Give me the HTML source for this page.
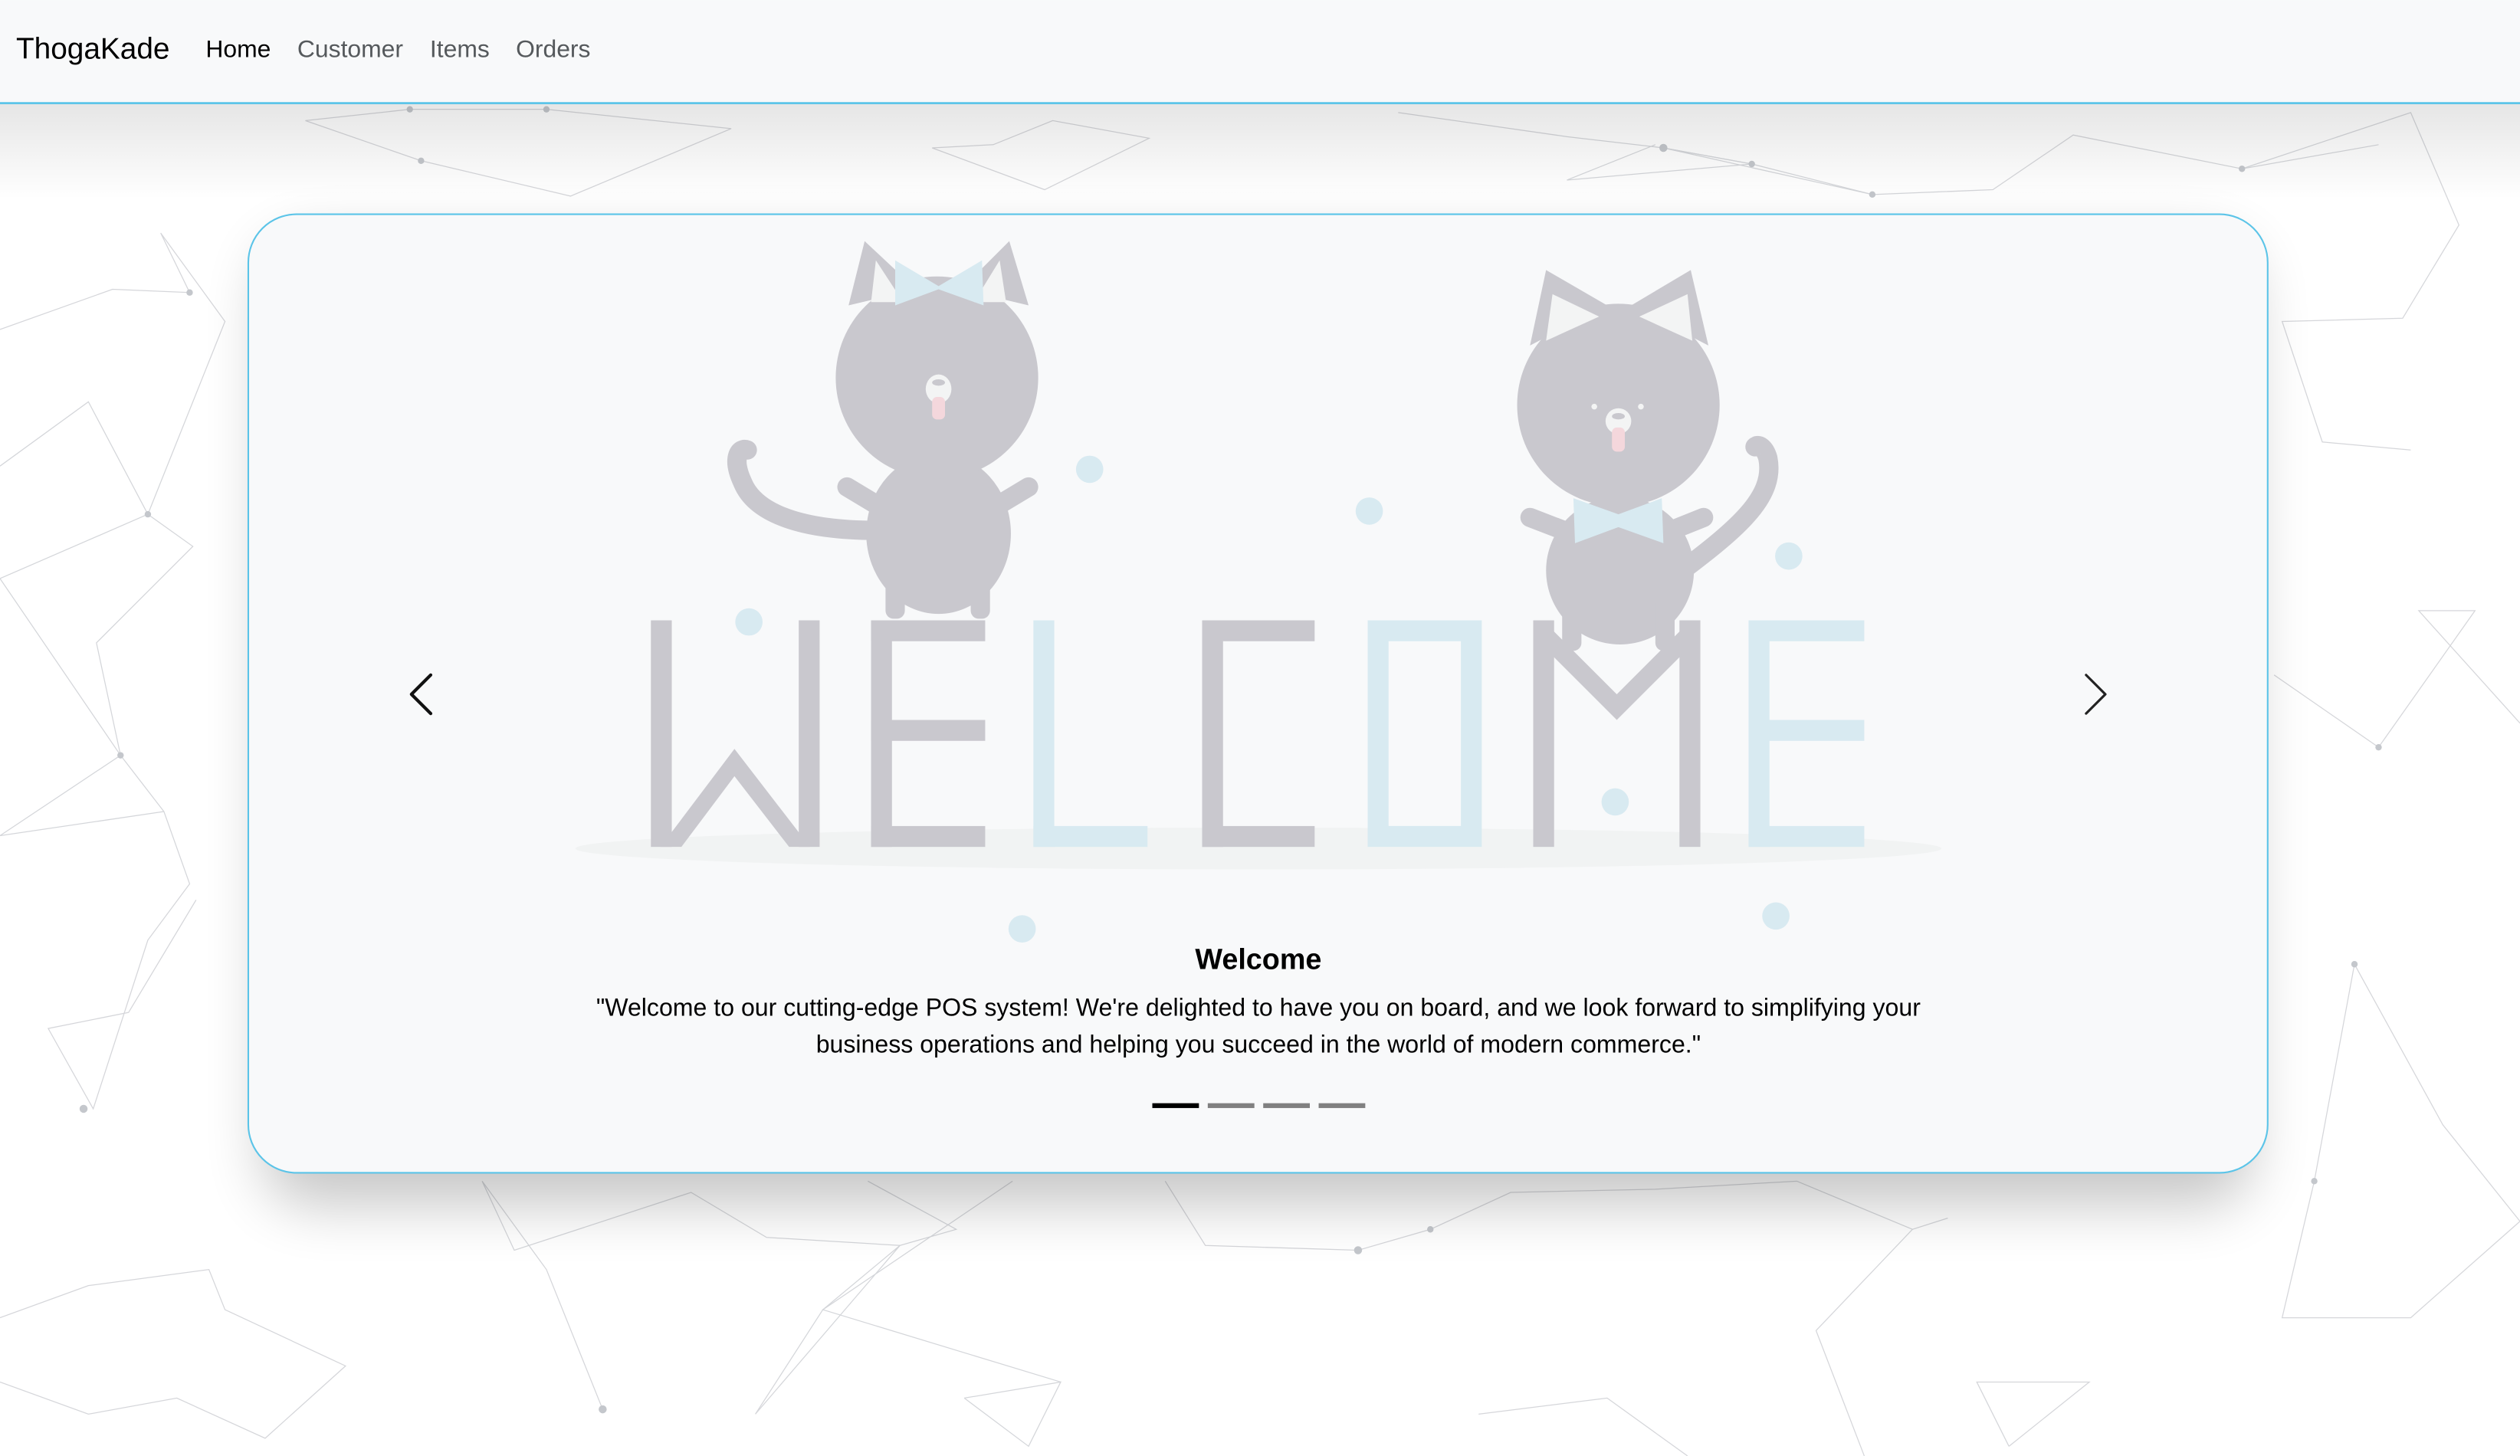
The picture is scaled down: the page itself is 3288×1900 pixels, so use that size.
<!DOCTYPE html>
<html><head><meta charset="utf-8">
<style>
html,body{margin:0;padding:0;background:#fff;width:3288px;height:1900px;overflow:hidden}
svg{display:block}
text{font-family:"Liberation Sans",sans-serif}
</style></head>
<body>
<svg width="3288" height="1900" viewBox="0 0 1568 906" xmlns="http://www.w3.org/2000/svg">
<defs>
<linearGradient id="nsh" x1="0" y1="0" x2="0" y2="1">
<stop offset="0" stop-color="#000" stop-opacity="0.10"/>
<stop offset="1" stop-color="#000" stop-opacity="0"/>
</linearGradient>
<filter id="cs" x="-10%" y="-10%" width="120%" height="130%">
<feGaussianBlur stdDeviation="18"/>
</filter>
</defs>
<rect width="1568" height="906" fill="#fff"/>
<g stroke="#d0d2d6" stroke-width="0.6" fill="none" opacity="0.9">
<polyline points="190,75 255,68 340,68 455,80 355,122 262,100 190,75"/>
<polyline points="580,92 618,90 655,75 715,86 650,118 580,92"/>
<polyline points="870,70 975,85 1035,92 1090,102 1165,121 1240,118 1290,84 1395,105 1480,90"/>
<polyline points="1030,90 975,112 1090,102 1035,92 1165,121"/>
<polyline points="1395,105 1500,70 1530,140 1495,198 1420,200 1445,275 1500,280"/>
<polyline points="0,205 70,180 118,182 100,145 140,200 92,320 120,340 60,400 75,470 102,505 118,550 92,585 58,690 30,640 80,630 122,560"/>
<polyline points="0,290 55,250 92,320 0,360 75,470 0,520 102,505"/>
<polyline points="1415,420 1480,465 1540,380 1505,380 1568,450"/>
<polyline points="1440,735 1465,600 1520,700 1568,760 1500,820 1460,820 1420,820 1440,735"/>
<polyline points="1250,900 1300,860 1230,860 1250,900"/>
<polyline points="300,735 320,778 430,742 477,770 560,775 595,765 540,735"/>
<polyline points="725,735 750,775 845,778 890,765 940,742 1030,740 1118,735 1190,765 1212,758"/>
<polyline points="0,820 55,800 130,790 140,815 215,850 165,895 110,870 55,880 0,860"/>
<polyline points="470,880 512,815 560,775 470,880"/>
<polyline points="600,870 640,900 660,860 600,870"/>
<polyline points="920,880 1000,870 1050,906"/>
<polyline points="1130,828 1190,765 1130,828 1160,906"/>
<polyline points="630,735 512,815 660,860"/>
<polyline points="375,877 340,790 300,735"/>
</g>
<g fill="#c4c7cc">
<circle cx="255" cy="68" r="2"/><circle cx="340" cy="68" r="2"/><circle cx="262" cy="100" r="2"/>
<circle cx="1035" cy="92" r="2.5"/><circle cx="1090" cy="102" r="2"/><circle cx="1165" cy="121" r="2"/>
<circle cx="1395" cy="105" r="2"/><circle cx="118" cy="182" r="2"/><circle cx="92" cy="320" r="2"/>
<circle cx="75" cy="470" r="2"/><circle cx="52" cy="690" r="2.5"/><circle cx="1480" cy="465" r="2"/>
<circle cx="845" cy="778" r="2.5"/><circle cx="375" cy="877" r="2.5"/><circle cx="1440" cy="735" r="2"/>
<circle cx="1465" cy="600" r="2"/><circle cx="890" cy="765" r="2"/>
</g>
<rect x="0" y="64" width="1568" height="60" fill="url(#nsh)"/>
<rect x="0" y="0" width="1568" height="64" fill="#f8f9fa"/>
<rect x="0" y="63.5" width="1568" height="1.3" fill="#5bc4e8"/>
<text x="10" y="36.5" font-size="18.5" fill="#000">ThogaKade</text>
<text x="128" y="35.5" font-size="15.2" fill="#000">Home</text>
<text x="185" y="35.5" font-size="15.2" fill="#55595c">Customer</text>
<text x="267.5" y="35.5" font-size="15.2" fill="#55595c">Items</text>
<text x="321" y="35.5" font-size="15.2" fill="#55595c">Orders</text>
<rect x="164" y="150" width="1237" height="600" rx="30" fill="#000" opacity="0.22" filter="url(#cs)"/>
<rect x="154.5" y="133.3" width="1256.5" height="596.5" rx="30" fill="#f8f9fa" stroke="#5bc4e8" stroke-width="1"/>
<ellipse cx="783" cy="528" rx="425" ry="13" fill="#f1f3f3"/>
<g fill="#c9c8ce">
<rect x="405" y="386" width="13" height="141"/>
<rect x="497" y="386" width="13" height="141"/>
<polygon points="411,527 457,466 504,527 491,527 457,483 424,527"/>
<rect x="542" y="386" width="13" height="141"/>
<rect x="542" y="386" width="71" height="13"/>
<rect x="542" y="448" width="71" height="13"/>
<rect x="542" y="514" width="71" height="13"/>
<rect x="748" y="386" width="13" height="141"/>
<rect x="748" y="386" width="70" height="13"/>
<rect x="748" y="514" width="70" height="13"/>
<rect x="954" y="386" width="13" height="141"/>
<rect x="1045" y="386" width="13" height="141"/>
<polygon points="960,386 1006,432 1052,386 1052,402 1006,448 960,402"/>
</g>
<g fill="#d8eaf1">
<rect x="643" y="386" width="13" height="141"/>
<rect x="643" y="514" width="71" height="13"/>
<path d="M851,386h71v141h-71z M864,399v115h45v-115z" fill-rule="evenodd"/>
<rect x="1088" y="386" width="13" height="141"/>
<rect x="1088" y="386" width="72" height="13"/>
<rect x="1088" y="448" width="72" height="13"/>
<rect x="1088" y="514" width="72" height="13"/>
<circle cx="678" cy="292" r="8.5"/><circle cx="852" cy="318" r="8.5"/><circle cx="466" cy="387" r="8.5"/>
<circle cx="1113" cy="346" r="8.5"/><circle cx="1005" cy="499" r="8.5"/><circle cx="636" cy="578" r="8.5"/>
<circle cx="1105" cy="570" r="8.5"/>
</g>
<g fill="#c9c8ce">
<path d="M545,330 C500,330 470,320 462,300 C455,285 460,278 465,280" stroke="#c9c8ce" stroke-width="12" fill="none" stroke-linecap="round"/>
<path d="M527,303 L552,318 M640,303 L615,318" stroke="#c9c8ce" stroke-width="12" stroke-linecap="round"/>
<ellipse cx="584" cy="332" rx="45" ry="50"/>
<rect x="551" y="350" width="12" height="35" rx="5"/><rect x="604" y="350" width="12" height="35" rx="5"/>
<polygon points="528,190 538,150 570,180"/><polygon points="640,190 628,150 598,180"/>
<circle cx="583" cy="235" r="63"/>
</g>
<polygon points="542,188 545,162 562,188" fill="#f3f4f4"/>
<polygon points="626,188 622,162 606,188" fill="#f3f4f4"/>
<path d="M557,162 L584,178 L611,162 L612,190 L584,180 L557,190 Z" fill="#d8eaf1"/>
<ellipse cx="584" cy="242" rx="8" ry="9" fill="#f3f4f4"/>
<ellipse cx="584" cy="238" rx="4" ry="2" fill="#c9c8ce"/>
<rect x="580" y="247" width="8" height="14" rx="3" fill="#f4d7dc"/>
<g fill="#c9c8ce">
<path d="M1040,360 C1080,330 1105,310 1100,285 C1098,278 1094,276 1092,278" stroke="#c9c8ce" stroke-width="12" fill="none" stroke-linecap="round"/>
<path d="M952,322 L978,332 M1060,322 L1035,332" stroke="#c9c8ce" stroke-width="12" stroke-linecap="round"/>
<ellipse cx="1008" cy="355" rx="46" ry="46"/>
<rect x="972" y="370" width="12" height="35" rx="5"/><rect x="1030" y="370" width="12" height="35" rx="5"/>
<polygon points="952,215 962,168 1000,190"/><polygon points="1063,215 1052,168 1015,190"/>
<circle cx="1007" cy="252" r="63"/>
</g>
<polygon points="962,212 966,183 995,197" fill="#f3f4f4"/>
<polygon points="1053,212 1050,183 1020,197" fill="#f3f4f4"/>
<path d="M979,310 L1007,320 L1034,310 L1035,338 L1007,328 L980,338 Z" fill="#d8eaf1"/>
<circle cx="992" cy="253" r="1.8" fill="#f3f4f4"/><circle cx="1021" cy="253" r="1.8" fill="#f3f4f4"/>
<ellipse cx="1007" cy="262" rx="8" ry="8" fill="#f3f4f4"/>
<ellipse cx="1007" cy="259" rx="4" ry="2" fill="#c9c8ce"/>
<rect x="1003" y="266" width="8" height="15" rx="3" fill="#f4d7dc"/>
<path d="M268,420 L256,432 L268,444" stroke="#111" stroke-width="2" fill="none" stroke-linecap="round" stroke-linejoin="round"/>
<path d="M1298,420 L1310,432 L1298,444" stroke="#222" stroke-width="1.5" fill="none" stroke-linecap="round" stroke-linejoin="round"/>
<text x="783" y="603" font-size="18" font-weight="bold" text-anchor="middle" fill="#000">Welcome</text>
<text x="783" y="632" font-size="15.3" text-anchor="middle" fill="#000">"Welcome to our cutting-edge POS system! We're delighted to have you on board, and we look forward to simplifying your</text>
<text x="783" y="655" font-size="15.3" text-anchor="middle" fill="#000">business operations and helping you succeed in the world of modern commerce."</text>
<rect x="717" y="686.5" width="29" height="3" fill="#000"/>
<rect x="751.5" y="686.5" width="29" height="3" fill="#808080"/>
<rect x="786" y="686.5" width="29" height="3" fill="#808080"/>
<rect x="820.5" y="686.5" width="29" height="3" fill="#808080"/>
</svg>
</body></html>
